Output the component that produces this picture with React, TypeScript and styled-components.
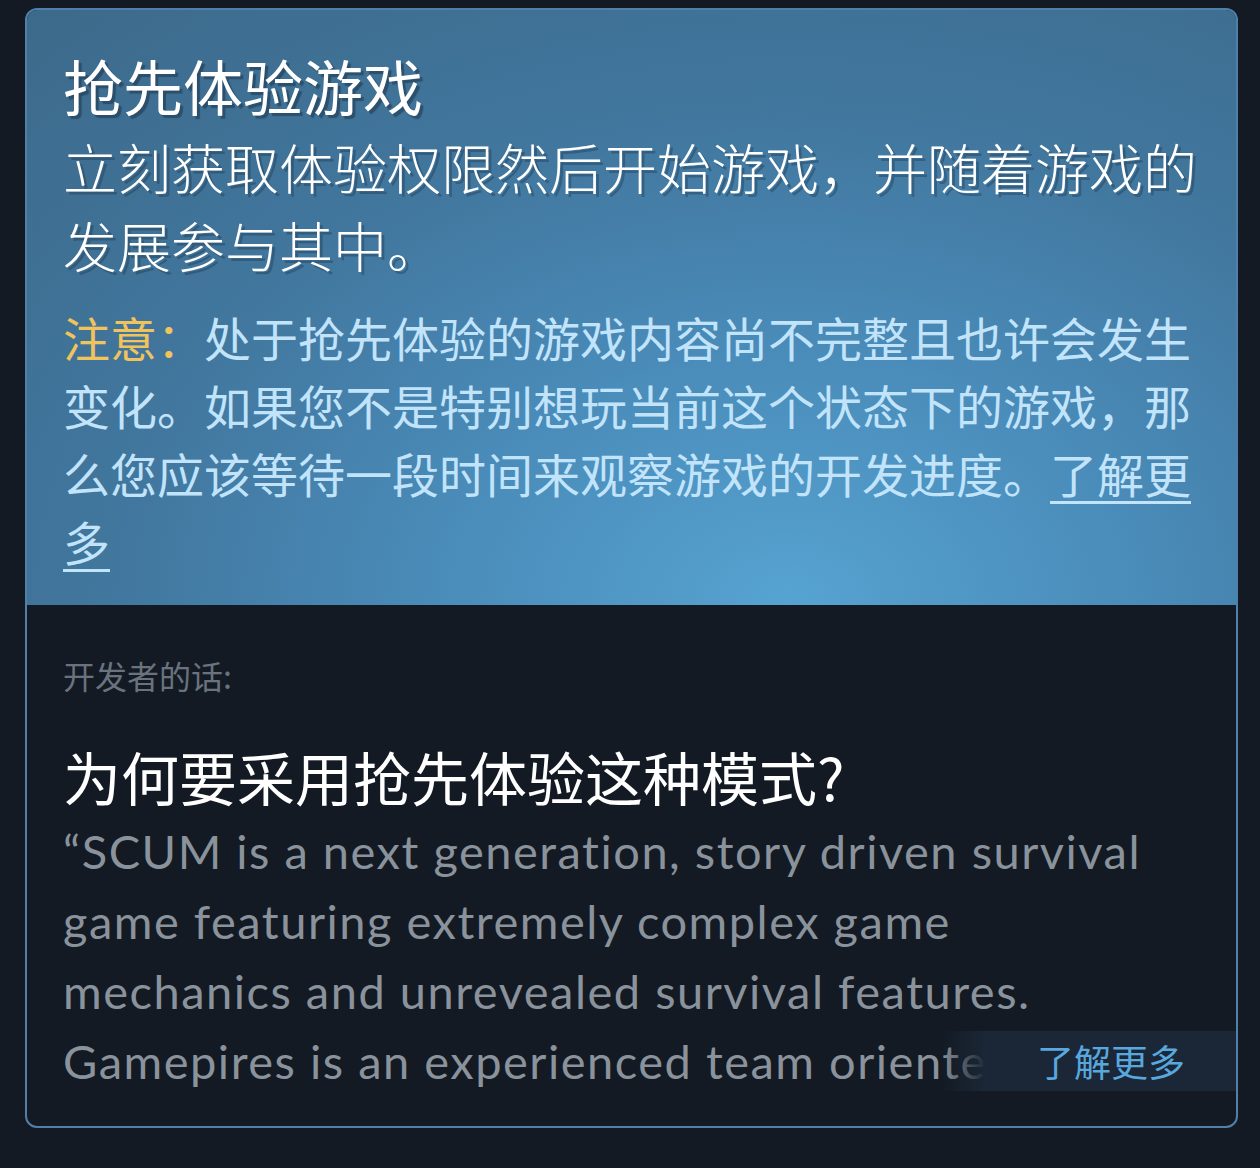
import React from "react";
import styled, { createGlobalStyle } from "styled-components";

const CJK = `"Noto Sans CJK SC", "Noto Sans", sans-serif`;
const LATIN = `Lato, "Noto Sans CJK SC", sans-serif`;

const GlobalStyle = createGlobalStyle`
  html, body {
    margin: 0;
    padding: 0;
    background: #131a24;
  }
  body {
    font-family: ${CJK};
    width: 1260px;
    height: 1168px;
    overflow: hidden;
  }
`;

const Page = styled.div`
  padding: 8px 22px 0 25px;
`;

const Card = styled.div`
  border: 2px solid #5080aa;
  border-radius: 12px;
  overflow: hidden;
  background: #131a24;
`;

const Banner = styled.div`
  background: radial-gradient(ellipse 95% 140% at 63% 100%, #56a3d1 0%, #4a8cba 30%, #41769d 60%, #3c6989 100%);
  padding: 39px 36px 30px 36px;
`;

const Title = styled.h1`
  margin: 0;
  color: #ffffff;
  font-family: ${CJK};
  font-size: 60px;
  font-weight: 400;
  line-height: 72px;
  text-shadow: 3px 3px 1px rgba(25, 45, 65, 0.5);
`;

const Subtitle = styled.p`
  margin: 7px 0 19px 0;
  color: #ffffff;
  font-size: 54px;
  font-weight: 300;
  line-height: 78px;
  text-shadow: 3px 3px 0 rgba(25, 45, 65, 0.35);
`;

const Notice = styled.p`
  margin: 0;
  color: #c2e4fb;
  font-size: 47px;
  line-height: 68px;
`;

const Warn = styled.span`
  color: #f0c35c;
`;

const InlineLink = styled.a`
  color: #c2e4fb;
  text-decoration: underline;
  text-underline-offset: 8px;
  text-decoration-thickness: 3px;
`;

const Body = styled.div`
  position: relative;
  padding: 50px 36px 30px 36px;
`;

const Label = styled.div`
  color: #6a737d;
  font-size: 32px;
  line-height: 40px;
`;

const Heading = styled.h2`
  margin: 46px 0 0 0;
  color: #ffffff;
  font-family: ${CJK};
  font-size: 58px;
  font-weight: 400;
  line-height: 70px;
`;

const Quote = styled.div`
  margin-top: 5px;
  height: 280px;
  overflow: hidden;
`;

const QuoteText = styled.p`
  margin: 0;
  padding-right: 40px;
  color: #8a929b;
  font-family: ${LATIN};
  font-size: 47px;
  letter-spacing: 1.5px;
  line-height: 70px;
`;

const MoreBar = styled.div`
  position: absolute;
  right: 0;
  bottom: 35px;
  width: 295px;
  height: 60px;
  display: flex;
  align-items: center;
  justify-content: flex-end;
  padding-right: 51px;
  box-sizing: border-box;
  background: linear-gradient(to right, rgba(27, 39, 54, 0) 0px, #1b2736 45px);
`;

const MoreLink = styled.span`
  color: #58a8df;
  font-size: 37px;
  line-height: 1;
`;

const App: React.FC = () => {
  return (
    <>
      <GlobalStyle />
      <Page>
        <Card>
          <Banner>
            <Title>抢先体验游戏</Title>
            <Subtitle>立刻获取体验权限然后开始游戏，并随着游戏的发展参与其中。</Subtitle>
            <Notice>
              <Warn>注意：</Warn>处于抢先体验的游戏内容尚不完整且也许会发生变化。如果您不是特别想玩当前这个状态下的游戏，那么您应该等待一段时间来观察游戏的开发进度。
              <InlineLink>了解更多</InlineLink>
            </Notice>
          </Banner>
          <Body>
            <Label>开发者的话:</Label>
            <Heading>为何要采用抢先体验这种模式?</Heading>
            <Quote>
              <QuoteText>
                “SCUM is a next generation, story driven survival game featuring extremely complex game mechanics and unrevealed survival features. Gamepires is an experienced team oriented towards making this game the best it can be.
              </QuoteText>
            </Quote>
            <MoreBar>
              <MoreLink>了解更多</MoreLink>
            </MoreBar>
          </Body>
        </Card>
      </Page>
    </>
  );
};

export default App;
